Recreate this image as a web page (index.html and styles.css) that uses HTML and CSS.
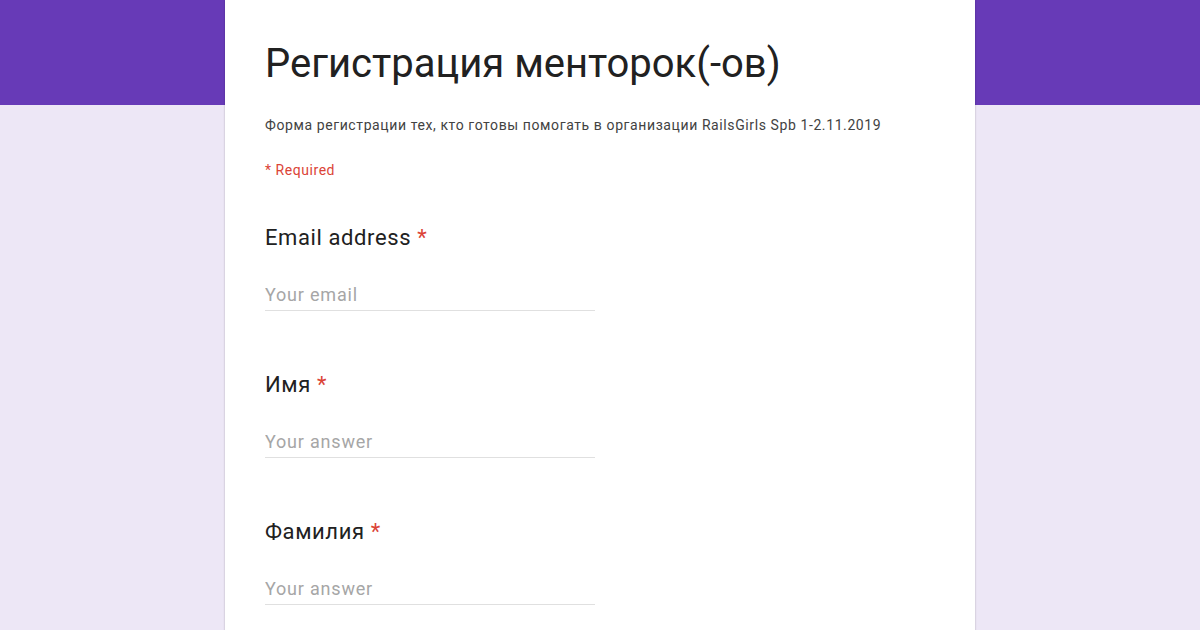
FILE: index.html
```html
<!DOCTYPE html>
<html>
<head>
    <title>Регистрация менторок(-ов)</title>
    <link rel="stylesheet" href="styles.css">
</head>
<body>
    <div class="header-band"></div>
    <div class="form-card">
        <h1 class="form-title">Регистрация менторок(-ов)</h1>
        <p class="form-desc">Форма регистрации тех, кто готовы помогать в организации RailsGirls Spb 1-2.11.2019</p>
        <p class="required-note">* Required</p>

        <div class="question">
            <div class="question-title">Email address <span class="star">*</span></div>
            <input class="answer" type="email" placeholder="Your email">
        </div>

        <div class="question">
            <div class="question-title">Имя <span class="star">*</span></div>
            <input class="answer" type="text" placeholder="Your answer">
        </div>

        <div class="question">
            <div class="question-title">Фамилия <span class="star">*</span></div>
            <input class="answer" type="text" placeholder="Your answer">
        </div>
    </div>
</body>
</html>
```

FILE: styles.css
```css
body {
    margin: 0;
    background-color: #ede7f6;
    font-family: Roboto, "Liberation Sans", Arial, sans-serif;
    height: 630px;
    overflow: hidden;
}

.header-band {
    height: 105px;
    background-color: #673ab7;
}

.form-card {
    background-color: white;
    width: 750px;
    margin: -105px auto 0;
    padding: 40px 40px 0;
    box-sizing: border-box;
    height: 660px;
    box-shadow: 0 0 2px rgba(0, 0, 0, 0.25);
}

.form-title {
    font-size: 40px;
    font-weight: 400;
    color: #212121;
    margin: 0;
    line-height: 48px;
}

.form-desc {
    font-size: 14px;
    letter-spacing: 0.6px;
    color: #424242;
    margin: 27px 0 0;
    line-height: 20px;
}

.required-note {
    font-size: 14px;
    letter-spacing: 0.55px;
    color: #db4437;
    margin: 25px 0 0;
    line-height: 20px;
}

.question {
    margin-top: 44px;
}

.question + .question {
    margin-top: 60px;
}

.question-title {
    font-size: 22px;
    letter-spacing: 0.6px;
    color: #212121;
    line-height: 28px;
}

.star {
    color: #db4437;
}

.answer {
    display: block;
    width: 330px;
    margin-top: 31px;
    border: none;
    border-bottom: 1px solid #e0e0e0;
    padding: 0 0 3px;
    font-family: inherit;
    font-size: 18px;
    letter-spacing: 0.8px;
    line-height: 24px;
    color: #212121;
    outline: none;
}

.answer::placeholder {
    color: #a6a6a6;
}
```
